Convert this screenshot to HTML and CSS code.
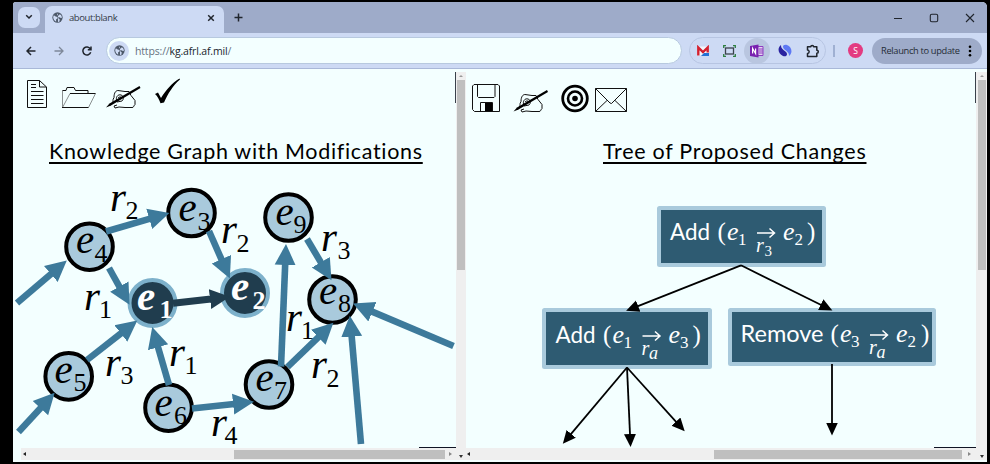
FILE: index.html
```html
<!DOCTYPE html>
<html lang="en">
<head>
<meta charset="utf-8">
<title>Knowledge Graph</title>
<link rel="stylesheet" href="styles.css">
</head>
<body>
<div class="window">
  <header class="tabstrip">
    <button class="tab-search"><svg width="8" height="6" viewBox="0 0 8 6"><path d="M1.2 1.2 4 4l2.800-2.800" class="ink-line"/></svg></button>
    <div class="tab">
      <svg class="globe" width="11" height="11" viewBox="0 0 12 12"><circle cx="6" cy="6" r="5.600" fill="#4d596a"/><path d="M2 3.500 4 5l2 .5v1.500L4.500 8v2.500C2.500 9.500 1.300 7.500 1.300 5.500zM6.500 1.300l-1 1.700 1.500 1 1-1.200 1.500.2c1 1 1.300 2 1.200 3.500L9 6.200 7.500 5.500l-.8.5.8 1.500 1 .5-.5 2.500-1.500.4" fill="#cddaf4"/></svg>
      <span class="tab-title">about:blank</span>
      <svg class="tab-close" width="8" height="8" viewBox="0 0 8 8"><path d="M1.200 1.200l5.600 5.600M6.800 1.200 1.200 6.800" class="ink-line"/></svg>
    </div>
    <svg class="new-tab" width="9" height="9" viewBox="0 0 9 9"><path d="M4.500.5v8M.5 4.500h8" class="ink-line"/></svg>
    <div class="controls">
      <svg width="10" height="10" viewBox="0 0 10 10"><path d="M1 5.500h8" class="ink-thin"/></svg>
      <svg width="10" height="10" viewBox="0 0 10 10"><rect x="1.300" y="1.300" width="7.400" height="7.400" rx="1.500" class="ink-thin"/></svg>
      <svg width="10" height="10" viewBox="0 0 10 10"><path d="M1 1l8 8M9 1 1 9" class="ink-thin"/></svg>
    </div>
  </header>

  <nav class="toolbar">
    <div class="nav-icons">
      <svg width="10" height="10" viewBox="0 0 10 10"><path d="M9.500 5H1.200M5 1 1 5l4 4" class="ink-line"/></svg>
      <svg width="10" height="10" viewBox="0 0 10 10"><path d="M.5 5h8.300M5 1l4 4-4 4" class="muted-line"/></svg>
      <svg width="10" height="10" viewBox="0 0 10 10"><path d="M8.700 6.200A4 4 0 1 1 8.300 2.800M9 .6v3.200H5.800" class="ink-line"/></svg>
    </div>
    <div class="address">
      <span class="site-badge"><svg width="11" height="11" viewBox="0 0 12 12"><circle cx="6" cy="6" r="5.600" fill="#4d596a"/><path d="M2 3.500 4 5l2 .5v1.500L4.500 8v2.500C2.500 9.500 1.300 7.500 1.300 5.500zM6.500 1.300l-1 1.700 1.500 1 1-1.200 1.500.2c1 1 1.300 2 1.200 3.500L9 6.200 7.500 5.500l-.8.5.8 1.500 1 .5-.5 2.500-1.500.4" fill="#cddaf4"/></svg></span>
      <span class="url"><i>https://</i>kg.afrl.af.mil<i>/</i></span>
    </div>
    <div class="extensions">
      <svg width="12" height="12" viewBox="0 0 12 12"><rect y="1.500" width="12" height="9" rx="1" fill="#f4f6fb"/><path d="M1.300 10.500V2.500L6 7l4.700-4.500v5" fill="none" stroke="#d3202f" stroke-width="2.400"/><path d="M4 11h8V8H7z" fill="#2471d4"/></svg>
      <svg width="13" height="12" viewBox="0 0 13 12"><rect x="2.500" y="3" width="8" height="6" fill="none" stroke="#3b424c" stroke-width="1.300"/><path d="M.7 3V.7H3M10 .7h2.300V3M.7 9v2.300H3M10 11.300h2.300V9" fill="none" stroke="#2f8040" stroke-width="1.300"/></svg>
      <span class="ext-active"><svg width="14" height="14" viewBox="0 0 14 14"><path d="M7 2.500h6v9H7z" fill="#e6d4f2" stroke="#8e3fc0"/><path d="M9 5h4M9 7h4M9 9h4" stroke="#8e3fc0"/><path d="M0 2l8.500-1.500v13L0 12z" fill="#7a22b0"/><path d="M2.600 9.500v-5l3 5v-5" fill="none" stroke="#fff" stroke-width="1.200"/></svg></span>
      <svg width="14" height="13" viewBox="0 0 14 13"><path d="M3 1C-1 4 0 10 5 12c4 1 5-2 3-4L5.500 6C3.500 4.500 3 3 3 1z" fill="#2a22a0"/><path d="M11 12c4-3 3-9-2-11C5 0 4 3 6 5l2.500 2C10.500 8.500 11 10 11 12z" fill="#5d78f4"/></svg>
      <svg width="14" height="14" viewBox="0 0 14 14"><path d="M1.500 2.800h3.300a1.400 1.400 0 0 1 2.800 0h3.200v3.500a1.500 1.500 0 0 1 0 3v3.300H1.500V9.500c2.200 0 2.200-3.400 0-3.400z" fill="none" stroke="#20252d" stroke-width="1.500" stroke-linejoin="round"/></svg>
    </div>
    <span class="divider"></span>
    <span class="avatar">S</span>
    <button class="relaunch"><span>Relaunch to update</span><svg width="4" height="12" viewBox="0 0 4 12"><circle cx="2" cy="1.700" r="1.300"/><circle cx="2" cy="6" r="1.300"/><circle cx="2" cy="10.300" r="1.300"/></svg></button>
  </nav>

  <main class="panes">
    <section class="pane pane-graph">
      <div class="view">
        <svg class="tools" width="442" height="42" viewBox="13 75 442 42">
          <g class="hair">
            <path d="M27.500 80.500h12l7 6.500v20.500h-19zM39.500 80.500V87h7M31 84.500h5M31 87.500h5M31 91.500h12.500M31 95.500h12.500M31 99.500h12.500M31 103.500h12.500"/>
            <path class="faint" d="M62.500 107.500V90.500M62.500 107.500 70 93.500M88.500 107.500l7-14"/>
            <path d="M62.500 90.500h3.500l1-3h7l1.500 3h12.500v2.500M62 107.500h26.500M70 93.500h25.500"/>
            <path d="M112 103.500c2-3 0-3 2-6 0-5 2-7 4-7l7 1h4l2 4 4 5v4c-2 2-1 3-3 3h-4l-3 0-6-.5-4 1-1-2 3-1M117 102c-2-5 1-8 4-7s3 4 1 6l-5 1M118 98c2-2 4-1 3 1"/>
          </g>
          <path d="M106 107.500l3.500-4L139.500 86l1 2L111 105.500z"/>
          <path d="M155 94l3-1.500 3 5.500c5-8 11-15 18.500-19.500l.5 1c-7 6-12 14-16 23l-3.500.8c-1.500-4-3-7-5.500-9.300z"/>
        </svg>
        <h1 class="title title-graph"><span>Knowledge Graph with Modifications</span></h1>
        <svg class="diagram" width="442" height="277" viewBox="13 170 442 277">
          <defs>
            <marker id="head" markerUnits="userSpaceOnUse" markerWidth="24" markerHeight="24" viewBox="0 -12 24 24" refX="1" orient="auto"><path d="M0-10.500 21 0 0 10.500z" fill="#3d7a9b"/></marker>
            <marker id="head-dark" markerUnits="userSpaceOnUse" markerWidth="24" markerHeight="24" viewBox="0 -12 24 24" refX="1" orient="auto"><path d="M0-10 20 0 0 10z" fill="#203d4e"/></marker>
          </defs>
          <g class="nodes">
            <circle cx="89.500" cy="246.700" r="23.300"/><circle cx="191.500" cy="213" r="23.300"/>
            <circle cx="288.500" cy="217.500" r="23.300"/><circle cx="332.500" cy="299.500" r="23.300"/>
            <circle cx="68.700" cy="376.400" r="23.300"/><circle cx="168.500" cy="407.700" r="23.300"/>
            <circle cx="269" cy="384.500" r="23.300"/>
          </g>
          <g class="nodes picked"><circle cx="152.500" cy="303" r="23"/><circle cx="245" cy="293" r="23"/></g>
          <g class="edges">
            <path d="M17 303 51.600 273.400"/><path d="M106 231.500 150.200 218.600"/><path d="M109 268 119.800 287.400"/>
            <path d="M209 231 221.800 260.100"/><path d="M87 360 121.600 332.800"/><path d="M18.500 432 41.100 407.500"/>
            <path d="M169 385 157.800 346.300"/><path d="M192 408.500 234.100 404"/><path d="M281 366.500 285.200 264"/>
            <path d="M287.500 367 319 336.600"/><path d="M307 239 321.300 263.100"/><path d="M361 444 351.600 335.600"/>
            <path d="M453.500 346 371.500 311.400"/>
          </g>
          <path class="edge-dark" d="M173 303.300 211 298.900"/>
          <g class="math">
            <text x="76" y="253">e</text><text x="178.500" y="221">e</text><text x="275.500" y="225">e</text><text x="319" y="304">e</text>
            <text x="54.500" y="383">e</text><text x="154.500" y="416">e</text><text x="255.500" y="391">e</text>
            <text x="110" y="211">r</text><text x="221" y="243">r</text><text x="321" y="250.500">r</text><text x="84" y="310">r</text>
            <text x="105" y="376">r</text><text x="169" y="366">r</text><text x="211" y="436">r</text><text x="286" y="331">r</text><text x="311" y="378">r</text>
          </g>
          <g class="sub">
            <text x="94.500" y="262">4</text><text x="197.500" y="229.500">3</text><text x="293.500" y="232.500">9</text><text x="338" y="312">8</text>
            <text x="73.500" y="391">5</text><text x="174" y="424">6</text><text x="274" y="399">7</text>
            <text x="125.500" y="219">2</text><text x="236.500" y="252">2</text><text x="337.500" y="259">3</text><text x="99" y="318">1</text>
            <text x="120.500" y="384">3</text><text x="184.500" y="374">1</text><text x="224.500" y="444">4</text><text x="301" y="339">1</text><text x="326.500" y="387">2</text>
          </g>
          <g class="math strong"><text x="137" y="310">e</text><text x="231" y="300">e</text></g>
          <g class="sub strong"><text x="159.500" y="318">1</text><text x="252.500" y="309">2</text></g>
        </svg>
      </div>
      <div class="vscroll"><span class="up"></span><span class="thumb"></span></div>
      <div class="hscroll"><span class="left"></span><span class="thumb"></span><span class="right"></span></div>
      <div class="corner"></div>
    </section>

    <section class="pane pane-tree">
      <div class="view">
        <svg class="tools" width="509" height="42" viewBox="466 75 509 42">
          <g class="hair">
            <path d="M474 84.500h24l1.500 1.500v25.500h-25l-2-2V86zM477.500 84.500v12l1 1h15.500l1-1v-12M480.500 111.500V102.500h12v9"/>
            <path d="M519 107.500c2-3 0-3 2-6 0-5 2-7 4-7l7 1h4l2 4 4 5v4c-2 2-1 3-3 3h-4l-3 0-6-.5-4 1-1-2 3-1M524 106c-2-5 1-8 4-7s3 4 1 6l-5 1M525 102c2-2 4-1 3 1"/>
            <path d="M595.500 88.500h31v23h-31zM595.500 88.500 610 103l1.500.5L626.500 88.500M595.500 111.500 607 100.500M626.500 111.500 615 100.500"/>
          </g>
          <path d="M485 103h7v8h-7z"/>
          <path d="M513.500 111.500l3.500-4L547 90l1 2-29.500 17.500z"/>
          <circle cx="575" cy="98.500" r="12.300" fill="none" stroke="#000" stroke-width="2.800"/><circle cx="575" cy="98.500" r="7" fill="none" stroke="#000" stroke-width="2.600"/><circle cx="575" cy="98.500" r="2.800"/>
        </svg>
        <h1 class="title title-tree"><span>Tree of Proposed Changes</span></h1>
        <svg class="diagram" width="509" height="277" viewBox="466 170 509 277">
          <defs>
            <marker id="tip" markerUnits="userSpaceOnUse" markerWidth="14" markerHeight="14" viewBox="0 -7 14 14" refX="9" orient="auto"><path d="M0-6 13 0 0 6z"/></marker>
          </defs>
          <g class="boxes">
            <rect x="659" y="208" width="165" height="57" rx=".5"/>
            <rect x="544" y="310" width="166" height="57" rx=".5"/>
            <rect x="730" y="310" width="204" height="54" rx=".5"/>
          </g>
          <g class="branches">
            <path d="M741 265.300 629.800 309.400"/><path d="M741 265.300 828.800 308.700"/>
            <path d="M627 367.500 565.400 440.700"/><path d="M627 367.500 630.400 443"/><path d="M627 367.500 682 428.300"/><path d="M832 364 832 431.500"/>
          </g>
          <g class="formula">
            <text x="670" y="240" textLength="40" lengthAdjust="spacingAndGlyphs">Add</text>
            <text class="paren" x="717.500" y="240">(</text><text class="var" x="727" y="240">e</text><text class="idx" x="738" y="245">1</text>
            <path d="M757 233h17M769.500 228.500l5 4.500-5 4.500"/><text class="rel" x="756" y="252">r</text><text class="rel-idx" x="764.500" y="256">3</text>
            <text class="var" x="783" y="240">e</text><text class="idx" x="794.500" y="244.500">2</text><text class="paren" x="807" y="240">)</text>
          </g>
          <g class="formula" transform="translate(-114.500 103)">
            <text x="670" y="240" textLength="40" lengthAdjust="spacingAndGlyphs">Add</text>
            <text class="paren" x="717.500" y="240">(</text><text class="var" x="727" y="240">e</text><text class="idx" x="738" y="245">1</text>
            <path d="M757 233h17M769.500 228.500l5 4.500-5 4.500"/><text class="rel" x="756" y="252">r</text><text class="rel-idx it" x="763.500" y="256">a</text>
            <text class="var" x="783" y="240">e</text><text class="idx" x="794.500" y="245">3</text><text class="paren" x="807" y="240">)</text>
          </g>
          <g class="formula" transform="translate(113 102)">
            <text x="627.500" y="240" textLength="83" lengthAdjust="spacingAndGlyphs">Remove</text>
            <text class="paren" x="717.500" y="240">(</text><text class="var" x="727" y="240">e</text><text class="idx" x="738" y="245">3</text>
            <path d="M757 233h17M769.500 228.500l5 4.500-5 4.500"/><text class="rel" x="756" y="252">r</text><text class="rel-idx it" x="763.500" y="256">a</text>
            <text class="var" x="783" y="240">e</text><text class="idx" x="794.500" y="245">2</text><text class="paren" x="808" y="240">)</text>
          </g>
        </svg>
      </div>
      <div class="vscroll"><span class="up"></span><span class="thumb"></span></div>
      <div class="hscroll"><span class="left"></span><span class="thumb"></span><span class="right"></span></div>
      <div class="corner"></div>
    </section>
  </main>
</div>
</body>
</html>
```
FILE: styles.css
```css
* { box-sizing: border-box; }
body { margin: 0; padding: 2px 3px 2px 13px; height: 464px; background: #000; overflow: hidden; font-family: "Open Sans", sans-serif; }
svg { display: block; flex: none; }
button { border: 0; padding: 0; font: inherit; }

.window { display: flex; flex-direction: column; height: 460px; background: #f3ffff; border-radius: 3px 5px 0 0; overflow: hidden; }
.ink-line { fill: none; stroke: #20252d; stroke-width: 1.500; }
.ink-thin { fill: none; stroke: #20252d; stroke-width: 1.100; }
.muted-line { fill: none; stroke: #7e8899; stroke-width: 1.300; }

.tabstrip { display: flex; align-items: center; height: 31px; flex: none; background: #9eabc9; padding: 4px 12px 0 5px; }
.tab-search { display: flex; align-items: center; justify-content: center; width: 22px; height: 21px; margin-bottom: 5px; border-radius: 7px; background: #cddaf4; }
.tab { display: flex; align-items: center; width: 179px; height: 27px; margin-left: 5px; padding: 0 9px 4px 7px; border-radius: 7px 7px 0 0; background: #cddaf4; }
.tab-title { margin-left: 6px; font-size: 9.500px; letter-spacing: -.42px; line-height: 14px; color: #343b48; }
.tab-close { margin-left: auto; }
.new-tab { margin: 0 0 4px 10px; }
.controls { display: flex; gap: 26px; margin: 0 0 4px auto; }

.toolbar { display: flex; align-items: center; height: 36px; flex: none; padding: 0 5px 0 13px; background: #cddaf4; border-bottom: 1px solid #a9b8d8; }
.nav-icons { display: flex; gap: 18px; }
.address { display: flex; align-items: center; width: 576px; height: 27px; margin-left: 14px; padding-left: 2px; border: 1px solid #b7c9df; border-radius: 14px; background: #f3ffff; }
.site-badge { display: flex; align-items: center; justify-content: center; width: 20px; height: 20px; border-radius: 50%; background: #cddaf4; }
.url { margin-left: 6px; font-size: 10.500px; letter-spacing: -.16px; color: #20252d; }
.url i { font-style: normal; color: #66717f; }
.extensions { display: flex; align-items: center; justify-content: space-between; width: 137px; height: 27px; margin-left: 7px; padding: 0 5px 0 7px; border: 1px solid #b7c5e2; border-radius: 14px; }
.ext-active { display: flex; align-items: center; justify-content: center; width: 26px; height: 26px; margin: 0 -6px; border-radius: 50%; background: #b9c6e0; }
.divider { width: 2px; height: 12px; margin-left: 7px; background: #9fb0d2; }
.avatar { width: 15px; height: 15px; margin-left: 13px; border-radius: 50%; background: #e33b81; color: #fff; font-size: 8.500px; line-height: 15px; text-align: center; }
.relaunch { display: flex; align-items: center; width: 110px; height: 26px; margin-left: auto; padding: 0 10px 0 9px; border-radius: 13px; background: #9eabc9; color: #252b36; font-size: 9.300px; letter-spacing: -.33px; white-space: nowrap; }
.relaunch svg { margin-left: auto; }

.panes { display: grid; grid-template-columns: 453px 521px; flex: 1; min-height: 0; }
.pane { display: grid; grid-template-rows: 379px 14px; min-width: 0; }
.pane-graph { grid-template-columns: 443px 10px; }
.pane-tree { grid-template-columns: 510px 11px; }
.view { padding-top: 6px; background: linear-gradient(#39414b, #39414b) right 0 top 3px / 1px 31px no-repeat, linear-gradient(#101424, #101424) right 0 bottom 0 / 37px 1px no-repeat; }
.pane-tree .view { background-size: 1px 31px, 42px 1px; }
.tools { height: 42px; }
.hair { fill: none; stroke: #111; stroke-width: 1; }
.hair .faint { stroke: #8a9090; }
.title { display: flex; height: 53px; margin: 0; padding-top: 19px; font: 400 21.500px/30px Lato, sans-serif; color: #000; white-space: nowrap; }
.title span { text-decoration: underline; text-decoration-thickness: 1.500px; text-underline-offset: 3px; text-decoration-skip-ink: none; }
.title-graph { padding-left: 36px; letter-spacing: .68px; }
.title-tree { padding-left: 137px; letter-spacing: .73px; }

.nodes circle { fill: #a9cadc; stroke: #000; stroke-width: 4; }
.picked circle { fill: #203d4e; stroke: #7db1cb; }
.edges path { fill: none; stroke: #3d7a9b; stroke-width: 6.600; marker-end: url(#head); }
.edge-dark { stroke: #203d4e; stroke-width: 7; marker-end: url(#head-dark); }
.math { font: italic 41px "Liberation Serif", serif; }
.sub { font: 26px "Liberation Serif", serif; }
.math.strong, .sub.strong { font-weight: 700; fill: #fff; }

.boxes rect { fill: #2e5b72; stroke: #a9cadc; stroke-width: 4; }
.branches path { fill: none; stroke: #000; stroke-width: 1.800; marker-end: url(#tip); }
.formula { fill: #fff; font: 22.500px Lato, sans-serif; }
.formula path { fill: none; stroke: #fff; stroke-width: 1.500; }
.formula .paren { font: 25px "Liberation Serif", serif; }
.formula .var { font: italic 26px "Liberation Serif", serif; }
.formula .idx { font: 17px "Liberation Serif", serif; }
.formula .rel { font: italic 20px "Liberation Serif", serif; }
.formula .rel-idx { font: 15px "Liberation Serif", serif; }
.formula .rel-idx.it { font-style: italic; font-size: 18px; }

.vscroll { display: flex; flex-direction: column; align-items: center; margin-top: 3px; background: #efefef; }
.vscroll .up { width: 0; margin: 3px 0 3px; border: 2px solid transparent; border-top: 0; border-bottom: 2.500px solid #999; }
.vscroll .thumb { width: 8px; height: 190px; background: #bfbfbf; }
.hscroll { display: flex; align-items: center; height: 12px; background: #efefef; }
.hscroll .left { border: 2.500px solid transparent; border-left: 0; border-right: 3px solid #222; }
.hscroll .right { margin-left: auto; border: 2.500px solid transparent; border-right: 0; border-left: 3px solid #888; }
.hscroll .thumb { height: 9px; background: #bfbfbf; }
.pane-graph .hscroll { margin-left: 8px; padding: 0 4px 0 2px; }
.pane-graph .hscroll .thumb { width: 211px; margin-left: 208px; }
.pane-tree .hscroll { padding: 0 5px 0 1px; }
.pane-tree .hscroll .thumb { width: 248px; margin-left: 244px; }
.corner { display: flex; align-items: center; justify-content: center; height: 12px; background: #efefef; }
.corner::after { content: ""; margin-top: 4px; border: 2.500px solid transparent; border-bottom: 0; border-top: 3px solid #333; }
```
